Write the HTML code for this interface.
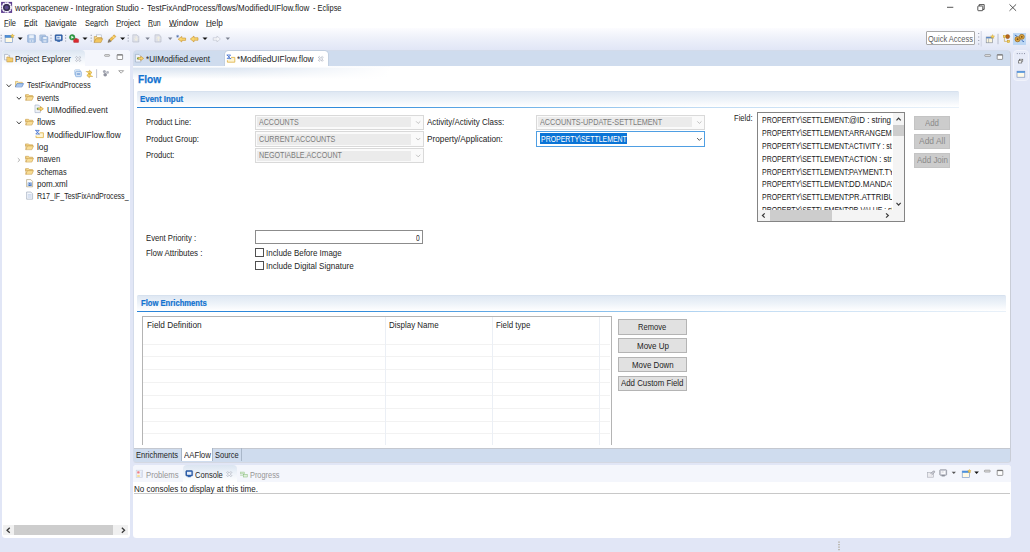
<!DOCTYPE html>
<html><head><meta charset="utf-8"><title>workspacenew - Integration Studio - Eclipse</title>
<style>
*{box-sizing:border-box;margin:0;padding:0}
html,body{width:1030px;height:552px;overflow:hidden;background:#e1e6f6}
body{position:relative;font-family:"Liberation Sans",sans-serif;font-size:8.6px;color:#1c1c1c}
.a{position:absolute}
.t{position:absolute;white-space:nowrap;line-height:12px;height:12px;transform-origin:0 0}
u{text-decoration-thickness:0.7px;text-underline-offset:0px;text-decoration-color:#8c8c8c}
svg{position:absolute;overflow:visible}
.s{display:inline-block;vertical-align:top;height:12px;white-space:pre}
.k{display:inline-block;transform-origin:0 0;white-space:pre}
</style></head><body>
<div class="a" style="left:0px;top:0px;width:1030.0px;height:28.0px;background:#fff"></div>
<div class="a" style="left:0px;top:28px;width:1030.0px;height:22.0px;background:linear-gradient(#fcfcff 0%,#eef1fa 45%,#e1e6f6 100%)"></div>
<div class="a" style="left:1.6px;top:50.3px;width:128.6px;height:487.5px;background:#fff;border-radius:3.5px"></div>
<div class="a" style="left:1.6px;top:50.3px;width:128.6px;height:16.1px;background:#f4f6fc;border-radius:3.5px 3.5px 0 0"></div>
<div class="a" style="left:1.6px;top:50.3px;width:83.4px;height:16.1px;background:linear-gradient(#dbe5f1,#f2f6fb 60%,#ffffff);border-radius:3.5px 4px 0 0"></div>
<div class="a" style="left:3.4px;top:525.1px;width:125.0px;height:10.3px;background:#f0f0f0"></div>
<div class="a" style="left:14.3px;top:525.1px;width:98.5px;height:10.3px;background:#cdcdcd"></div>
<div class="a" style="left:133px;top:50.4px;width:878.0px;height:412.5px;background:#cfdcee;border-radius:4.5px 4.5px 3.5px 3.5px;border:1px solid #d3dbea;border-right-color:#c9cdd7;border-bottom-color:#d4d8e2"></div>
<div class="a" style="left:134px;top:65.6px;width:876.0px;height:382.5px;background:#fff"></div>
<div class="a" style="left:134px;top:447.6px;width:876.0px;height:0.7px;background:#c4c8d0"></div>
<div class="a" style="left:133px;top:65.6px;width:257.0px;height:13.4px;background:linear-gradient(#ffffff 0%,#f3f6fb 11%,#d9e3f0 15%,#e8eef6 50%,#ffffff 100%)"></div>
<div class="a" style="left:133px;top:67px;width:257.0px;height:12.0px;background:linear-gradient(90deg,rgba(255,255,255,0) 0%,rgba(255,255,255,0.1) 40%,rgba(255,255,255,0.6) 72%,#fff 100%)"></div>
<div class="a" style="left:224.8px;top:50.6px;width:103.0px;height:15.4px;background:#fff;border-radius:3.5px 3.5px 0 0;box-shadow:0 0 0 0.7px #bccadc"></div>
<div class="a" style="left:224px;top:65.6px;width:105.0px;height:1.4px;background:#fff"></div>
<div class="a" style="left:136.8px;top:91.2px;width:822.2px;height:15.8px;background:linear-gradient(#cfdbea 0,#dfe8f3 1px,#eef3f9 55%,#ffffff 100%);border-radius:1.5px 1.5px 0 0"></div>
<div class="a" style="left:136.8px;top:106.6px;width:822.2px;height:1.3px;background:linear-gradient(90deg,#2a84d8 0%,#2f8ada 25%,#7cb9ea 50%,#c0dbf3 68%,#e9f1f9 100%)"></div>
<div class="a" style="left:136.8px;top:295.2px;width:869.2px;height:15.8px;background:linear-gradient(#cfdbea 0,#dfe8f3 1px,#eef3f9 55%,#ffffff 100%);border-radius:1.5px 1.5px 0 0"></div>
<div class="a" style="left:136.8px;top:310.6px;width:869.2px;height:1.3px;background:linear-gradient(90deg,#2a84d8 0%,#2f8ada 25%,#7cb9ea 50%,#c0dbf3 68%,#e9f1f9 100%)"></div>
<div class="a" style="left:255px;top:114.6px;width:169.0px;height:15.0px;background:#fafafa;border:1px solid #d9d9d9"></div>
<div class="a" style="left:256.7px;top:117.0px;width:154.7px;height:10.4px;background:#ebebeb"></div>
<div class="a" style="left:255px;top:131.2px;width:169.0px;height:15.6px;background:#fafafa;border:1px solid #d9d9d9"></div>
<div class="a" style="left:256.7px;top:133.6px;width:154.7px;height:11.0px;background:#ebebeb"></div>
<div class="a" style="left:255px;top:148.2px;width:169.0px;height:15.3px;background:#fafafa;border:1px solid #d9d9d9"></div>
<div class="a" style="left:256.7px;top:150.6px;width:154.7px;height:10.7px;background:#ebebeb"></div>
<div class="a" style="left:536px;top:114.6px;width:169.0px;height:15.0px;background:#fafafa;border:1px solid #d9d9d9"></div>
<div class="a" style="left:537.7px;top:117.0px;width:154.7px;height:10.4px;background:#ebebeb"></div>
<div class="a" style="left:536px;top:131.1px;width:169.0px;height:15.8px;background:#fff;border:1px solid #4f9fe3"></div>
<div class="a" style="left:540.2px;top:133.2px;width:86.6px;height:10.6px;background:#0a74d6"></div>
<div class="a" style="left:757.2px;top:112.4px;width:147.8px;height:109.9px;background:#fff;border:1px solid #848484"></div>
<div class="a" style="left:893.2px;top:113.4px;width:10.8px;height:96.4px;background:#f4f4f4"></div>
<div class="a" style="left:893.2px;top:124.8px;width:10.8px;height:11.0px;background:#cdcdcd"></div>
<div class="a" style="left:758.2px;top:209.8px;width:145.8px;height:11.5px;background:#f4f4f4"></div>
<div class="a" style="left:770.4px;top:209.8px;width:61.8px;height:11.5px;background:#cdcdcd"></div>
<div class="a" style="left:913.7px;top:115.5px;width:36.2px;height:14.7px;background:#cccccc;border:1px solid #c4c4c4"></div>
<div class="a" style="left:913.7px;top:134.1px;width:36.2px;height:14.7px;background:#cccccc;border:1px solid #c4c4c4"></div>
<div class="a" style="left:913.7px;top:153.2px;width:36.2px;height:14.7px;background:#cccccc;border:1px solid #c4c4c4"></div>
<div class="a" style="left:255.2px;top:230.3px;width:168.3px;height:14.1px;background:#fff;border:1px solid #8c8c8c"></div>
<div class="a" style="left:255.3px;top:248.1px;width:8.7px;height:8.7px;background:#fff;border:1px solid #505050"></div>
<div class="a" style="left:255.3px;top:261.3px;width:8.7px;height:8.7px;background:#fff;border:1px solid #505050"></div>
<div class="a" style="left:142.2px;top:316.2px;width:469.8px;height:129.2px;background:#fff;border:1px solid #b4b4b4;border-bottom:none"></div>
<div class="a" style="left:143.2px;top:343.5px;width:467.1px;height:1.0px;background:#f2f2f2"></div>
<div class="a" style="left:143.2px;top:356.35px;width:467.1px;height:1.0px;background:#f2f2f2"></div>
<div class="a" style="left:143.2px;top:369.2px;width:467.1px;height:1.0px;background:#f2f2f2"></div>
<div class="a" style="left:143.2px;top:382.05px;width:467.1px;height:1.0px;background:#f2f2f2"></div>
<div class="a" style="left:143.2px;top:394.9px;width:467.1px;height:1.0px;background:#f2f2f2"></div>
<div class="a" style="left:143.2px;top:407.75px;width:467.1px;height:1.0px;background:#f2f2f2"></div>
<div class="a" style="left:143.2px;top:420.6px;width:467.1px;height:1.0px;background:#f2f2f2"></div>
<div class="a" style="left:143.2px;top:433.45px;width:467.1px;height:1.0px;background:#f2f2f2"></div>
<div class="a" style="left:384.6px;top:317.2px;width:1.0px;height:128.2px;background:#ebeff5"></div>
<div class="a" style="left:491.9px;top:317.2px;width:1.0px;height:128.2px;background:#ebeff5"></div>
<div class="a" style="left:599.2px;top:317.2px;width:1.0px;height:128.2px;background:#ebeff5"></div>
<div class="a" style="left:618.3px;top:319.4px;width:68.3px;height:15.4px;background:#e1e1e1;border:1px solid #b4b4b4"></div>
<div class="a" style="left:618.3px;top:338.3px;width:68.3px;height:15.0px;background:#e1e1e1;border:1px solid #b4b4b4"></div>
<div class="a" style="left:618.3px;top:357.2px;width:68.3px;height:14.6px;background:#e1e1e1;border:1px solid #b4b4b4"></div>
<div class="a" style="left:618.3px;top:376.1px;width:68.3px;height:14.8px;background:#e1e1e1;border:1px solid #b4b4b4"></div>
<div class="a" style="left:181.5px;top:448.4px;width:30.6px;height:12.8px;background:#fff"></div>
<div class="a" style="left:181.0px;top:448.4px;width:0.7px;height:12.8px;background:#a9b7c9"></div>
<div class="a" style="left:212.0px;top:448.4px;width:0.7px;height:12.8px;background:#a9b7c9"></div>
<div class="a" style="left:240.6px;top:448.4px;width:0.7px;height:12.8px;background:#a9b7c9"></div>
<div class="a" style="left:132.6px;top:465.3px;width:878.4px;height:72.5px;background:#fff;border-radius:3.5px"></div>
<div class="a" style="left:132.6px;top:465.3px;width:878.4px;height:16.3px;background:#f4f6fc;border-radius:3.5px 3.5px 0 0"></div>
<div class="a" style="left:182.8px;top:465.3px;width:54.0px;height:16.3px;background:linear-gradient(#dbe5f1,#f2f6fb 60%,#ffffff);border-radius:4px 4px 0 0"></div>
<div class="a" style="left:133.5px;top:493.4px;width:876.0px;height:1.0px;background:#c8c8c8"></div>
<div class="a" style="left:926px;top:31.3px;width:48.8px;height:14.2px;background:#fff;border:1px solid #a8a8a8;border-radius:1px"></div>
<div class="a" style="left:1013.3px;top:33.2px;width:12.5px;height:11.5px;background:#bcd7f4"></div>
<div class="a" style="left:1012.8px;top:49.8px;width:16.0px;height:31.4px;background:#e7ebf8;border:1px solid #f1f3fb;border-radius:4px"></div>
<div class="t" style="left:15.0px;top:1.6px;font-size:8.6px;color:#1a1a1a"><span class="s" style="width:131.60px"><span class="k" style="transform:scaleX(0.9388)">workspacenew - Integration Studio - </span></span><span class="s" style="width:166.10px"><span class="k" style="transform:scaleX(0.9304)">TestFixAndProcess/flows/ModifiedUIFlow.flow </span></span><span class="s" style="width:68.50px"><span class="k" style="transform:scaleX(0.8649)">- Eclipse</span></span></div>
<div class="t" style="left:3.9px;top:16.8px;font-size:8.6px;color:#1a1a1a;transform:scaleX(0.8658);"><u>F</u>ile</div>
<div class="t" style="left:24.1px;top:16.8px;font-size:8.6px;color:#1a1a1a;transform:scaleX(0.8979);"><u>E</u>dit</div>
<div class="t" style="left:45.4px;top:16.8px;font-size:8.6px;color:#1a1a1a;transform:scaleX(0.9311);"><u>N</u>avigate</div>
<div class="t" style="left:84.7px;top:16.8px;font-size:8.6px;color:#1a1a1a;transform:scaleX(0.8587);">Se<u>a</u>rch</div>
<div class="t" style="left:116.0px;top:16.8px;font-size:8.6px;color:#1a1a1a;transform:scaleX(0.9009);"><u>P</u>roject</div>
<div class="t" style="left:148.4px;top:16.8px;font-size:8.6px;color:#1a1a1a;transform:scaleX(0.8048);"><u>R</u>un</div>
<div class="t" style="left:169.1px;top:16.8px;font-size:8.6px;color:#1a1a1a;transform:scaleX(0.9610);"><u>W</u>indow</div>
<div class="t" style="left:206.1px;top:16.8px;font-size:8.6px;color:#1a1a1a;transform:scaleX(0.9442);"><u>H</u>elp</div>
<div class="t" style="left:14.7px;top:52.8px;font-size:8.6px;color:#242424;transform:scaleX(0.9159);">Project Explorer</div>
<div class="t" style="left:26.8px;top:79.2px;font-size:8.6px;color:#242424;transform:scaleX(0.8646);">TestFixAndProcess</div>
<div class="t" style="left:36.7px;top:91.6px;font-size:8.6px;color:#242424;transform:scaleX(0.8686);">events</div>
<div class="t" style="left:46.9px;top:103.8px;font-size:8.6px;color:#242424;transform:scaleX(0.9411);">UIModified.event</div>
<div class="t" style="left:36.7px;top:116.3px;font-size:8.6px;color:#242424;transform:scaleX(0.9391);">flows</div>
<div class="t" style="left:46.8px;top:128.7px;font-size:8.6px;color:#242424;transform:scaleX(0.9644);">ModifiedUIFlow.flow</div>
<div class="t" style="left:36.7px;top:140.8px;font-size:8.6px;color:#242424;transform:scaleX(0.9766);">log</div>
<div class="t" style="left:36.7px;top:153.3px;font-size:8.6px;color:#242424;transform:scaleX(0.8993);">maven</div>
<div class="t" style="left:36.7px;top:165.6px;font-size:8.6px;color:#242424;transform:scaleX(0.8607);">schemas</div>
<div class="t" style="left:36.7px;top:177.8px;font-size:8.6px;color:#242424;transform:scaleX(0.9389);">pom.xml</div>
<div class="t" style="left:36.7px;top:190.3px;font-size:8.6px;color:#242424;transform:scaleX(0.8230);">R17_IF_TestFixAndProcess_</div>
<div class="t" style="left:145.7px;top:52.8px;font-size:8.6px;color:#242424;transform:scaleX(0.9448);">*UIModified.event</div>
<div class="t" style="left:237.2px;top:52.8px;font-size:8.6px;color:#242424;transform:scaleX(0.9591);">*ModifiedUIFlow.flow</div>
<div class="t" style="left:137.8px;top:72.9px;font-size:11.2px;color:#1272cf;transform:scaleX(0.9064);font-weight:bold;-webkit-text-stroke:0.25px #1272cf;">Flow</div>
<div class="t" style="left:140.4px;top:92.5px;font-size:8.6px;color:#1272cf;transform:scaleX(0.9231);font-weight:bold;-webkit-text-stroke:0.2px #1272cf;">Event Input</div>
<div class="t" style="left:140.5px;top:296.7px;font-size:8.6px;color:#1272cf;transform:scaleX(0.8890);font-weight:bold;-webkit-text-stroke:0.2px #1272cf;">Flow Enrichments</div>
<div class="t" style="left:145.6px;top:116.4px;font-size:8.6px;color:#242424;transform:scaleX(0.8906);">Product Line:</div>
<div class="t" style="left:145.6px;top:132.8px;font-size:8.6px;color:#242424;transform:scaleX(0.9094);">Product Group:</div>
<div class="t" style="left:145.6px;top:149.3px;font-size:8.6px;color:#242424;transform:scaleX(0.8902);">Product:</div>
<div class="t" style="left:426.6px;top:116.4px;font-size:8.6px;color:#242424;transform:scaleX(0.9279);">Activity/Activity Class:</div>
<div class="t" style="left:426.6px;top:132.8px;font-size:8.6px;color:#242424;transform:scaleX(0.9572);">Property/Application:</div>
<div class="t" style="left:259.4px;top:116.4px;font-size:8.6px;color:#7b7b7b;transform:scaleX(0.8231);">ACCOUNTS</div>
<div class="t" style="left:259.4px;top:132.8px;font-size:8.6px;color:#7b7b7b;transform:scaleX(0.8334);">CURRENT.ACCOUNTS</div>
<div class="t" style="left:259.4px;top:149.3px;font-size:8.6px;color:#7b7b7b;transform:scaleX(0.8306);">NEGOTIABLE.ACCOUNT</div>
<div class="t" style="left:540.2px;top:116.4px;font-size:8.6px;color:#7b7b7b;transform:scaleX(0.8434);">ACCOUNTS-UPDATE-SETTLEMENT</div>
<div class="t" style="left:540.6px;top:132.8px;font-size:8.6px;color:#fff;transform:scaleX(0.8069);">PROPERTY\SETTLEMENT</div>
<div class="t" style="left:733.9px;top:111.8px;font-size:8.6px;color:#242424;transform:scaleX(0.8851);">Field:</div>
<div class="a" style="left:758.2px;top:113.4px;width:134.2px;height:96.2px;overflow:hidden"><div class="t" style="left:4.1px;top:0.9px;font-size:8.3px;color:#1a1a1a"><span class="s" style="width:86.70px"><span class="k" style="transform:scaleX(0.8410)">PROPERTY\SETTLEMENT:</span></span><span class="s" style="width:82.00px"><span class="k" style="transform:scaleX(0.9559)">@ID : string</span></span></div></div>
<div class="a" style="left:758.2px;top:113.4px;width:134.2px;height:96.2px;overflow:hidden"><div class="t" style="left:4.1px;top:13.8px;font-size:8.3px;color:#1a1a1a"><span class="s" style="width:86.70px"><span class="k" style="transform:scaleX(0.8410)">PROPERTY\SETTLEMENT:</span></span><span class="s" style="width:82.80px"><span class="k" style="transform:scaleX(0.8925)">ARRANGEMENT</span></span></div></div>
<div class="a" style="left:758.2px;top:113.4px;width:134.2px;height:96.2px;overflow:hidden"><div class="t" style="left:4.1px;top:26.6px;font-size:8.3px;color:#1a1a1a"><span class="s" style="width:86.70px"><span class="k" style="transform:scaleX(0.8410)">PROPERTY\SETTLEMENT:</span></span><span class="s" style="width:80.80px"><span class="k" style="transform:scaleX(0.8453)">ACTIVITY : string</span></span></div></div>
<div class="a" style="left:758.2px;top:113.4px;width:134.2px;height:96.2px;overflow:hidden"><div class="t" style="left:4.1px;top:39.4px;font-size:8.3px;color:#1a1a1a"><span class="s" style="width:86.70px"><span class="k" style="transform:scaleX(0.8410)">PROPERTY\SETTLEMENT:</span></span><span class="s" style="width:82.70px"><span class="k" style="transform:scaleX(0.8992)">ACTION : string</span></span></div></div>
<div class="a" style="left:758.2px;top:113.4px;width:134.2px;height:96.2px;overflow:hidden"><div class="t" style="left:4.1px;top:52.2px;font-size:8.3px;color:#1a1a1a"><span class="s" style="width:86.70px"><span class="k" style="transform:scaleX(0.8410)">PROPERTY\SETTLEMENT:</span></span><span class="s" style="width:80.00px"><span class="k" style="transform:scaleX(0.8822)">PAYMENT.TYPE</span></span></div></div>
<div class="a" style="left:758.2px;top:113.4px;width:134.2px;height:96.2px;overflow:hidden"><div class="t" style="left:4.1px;top:65.1px;font-size:8.3px;color:#1a1a1a"><span class="s" style="width:86.70px"><span class="k" style="transform:scaleX(0.8410)">PROPERTY\SETTLEMENT:</span></span><span class="s" style="width:82.70px"><span class="k" style="transform:scaleX(0.9646)">DD.MANDATE</span></span></div></div>
<div class="a" style="left:758.2px;top:113.4px;width:134.2px;height:96.2px;overflow:hidden"><div class="t" style="left:4.1px;top:77.9px;font-size:8.3px;color:#1a1a1a"><span class="s" style="width:86.70px"><span class="k" style="transform:scaleX(0.8410)">PROPERTY\SETTLEMENT:</span></span><span class="s" style="width:79.50px"><span class="k" style="transform:scaleX(0.9247)">PR.ATTRIBUTE</span></span></div></div>
<div class="a" style="left:758.2px;top:113.4px;width:134.2px;height:96.2px;overflow:hidden"><div class="t" style="left:4.1px;top:90.7px;font-size:8.3px;color:#1a1a1a"><span class="s" style="width:86.70px"><span class="k" style="transform:scaleX(0.8410)">PROPERTY\SETTLEMENT:</span></span><span class="s" style="width:82.40px"><span class="k" style="transform:scaleX(0.8233)">PR.VALUE : string</span></span></div></div>
<div class="t" style="left:925.0px;top:116.5px;font-size:8.6px;color:#8a8a8a;transform:scaleX(0.9152);">Add</div>
<div class="t" style="left:918.9px;top:135.2px;font-size:8.6px;color:#8a8a8a;transform:scaleX(0.9826);">Add All</div>
<div class="t" style="left:916.5px;top:154.2px;font-size:8.6px;color:#8a8a8a;transform:scaleX(0.9267);">Add Join</div>
<div class="t" style="left:146.1px;top:231.7px;font-size:8.6px;color:#242424;transform:scaleX(0.8964);">Event Priority :</div>
<div class="t" style="left:416.1px;top:231.7px;font-size:8.6px;color:#242424;transform:scaleX(0.7739);">0</div>
<div class="t" style="left:146.1px;top:246.6px;font-size:8.6px;color:#242424;transform:scaleX(0.9241);">Flow Attributes :</div>
<div class="t" style="left:266.2px;top:246.5px;font-size:8.6px;color:#242424;transform:scaleX(0.9265);">Include Before Image</div>
<div class="t" style="left:266.2px;top:259.7px;font-size:8.6px;color:#242424;transform:scaleX(0.9414);">Include Digital Signature</div>
<div class="t" style="left:147.1px;top:318.5px;font-size:8.6px;color:#242424;transform:scaleX(0.9605);">Field Definition</div>
<div class="t" style="left:388.6px;top:318.5px;font-size:8.6px;color:#242424;transform:scaleX(0.9271);">Display Name</div>
<div class="t" style="left:495.9px;top:318.5px;font-size:8.6px;color:#242424;transform:scaleX(0.9204);">Field type</div>
<div class="t" style="left:638.2px;top:321.1px;font-size:8.6px;color:#242424;transform:scaleX(0.8812);">Remove</div>
<div class="t" style="left:636.6px;top:339.9px;font-size:8.6px;color:#242424;transform:scaleX(0.9305);">Move Up</div>
<div class="t" style="left:631.8px;top:358.6px;font-size:8.6px;color:#242424;transform:scaleX(0.9168);">Move Down</div>
<div class="t" style="left:620.9px;top:377.2px;font-size:8.6px;color:#242424;transform:scaleX(0.9149);">Add Custom Field</div>
<div class="t" style="left:136.4px;top:449.2px;font-size:8.6px;color:#242424;transform:scaleX(0.8814);">Enrichments</div>
<div class="t" style="left:183.8px;top:449.2px;font-size:8.6px;color:#242424;transform:scaleX(0.9051);">AAFlow</div>
<div class="t" style="left:215.0px;top:449.2px;font-size:8.6px;color:#242424;transform:scaleX(0.8702);">Source</div>
<div class="t" style="left:145.9px;top:468.6px;font-size:8.6px;color:#959595;transform:scaleX(0.8981);">Problems</div>
<div class="t" style="left:195.0px;top:468.6px;font-size:8.6px;color:#242424;transform:scaleX(0.8817);">Console</div>
<div class="t" style="left:250.0px;top:468.6px;font-size:8.6px;color:#959595;transform:scaleX(0.8578);">Progress</div>
<div class="t" style="left:134.3px;top:482.6px;font-size:8.6px;color:#242424;transform:scaleX(0.9364);">No consoles to display at this time.</div>
<div class="t" style="left:927.9px;top:32.7px;font-size:8.6px;color:#5a5a5a;transform:scaleX(0.8722);">Quick Access</div>
<svg width="1030" height="552" viewBox="0 0 1030 552" style="left:0;top:0"><rect x="1.10" y="1.90" width="11.00" height="11.00" fill="#5b3c8e" stroke="none" stroke-width="0.7" rx="0" opacity="1"/>
<circle cx="6.60" cy="7.40" r="4.00" fill="none" stroke="#f6f4fb" stroke-width="1.2" opacity="0.9"/>
<circle cx="6.60" cy="7.40" r="4.50" fill="none" stroke="#f6f4fb" stroke-width="1.7" stroke-dasharray="1.75 0.6" opacity="1"/>
<circle cx="6.60" cy="7.40" r="3.50" fill="#34304c" stroke="none" stroke-width="0.7" opacity="1"/>
<circle cx="6.60" cy="7.40" r="2.00" fill="#5b4a8d" stroke="none" stroke-width="0.7" opacity="1"/>
<line x1="947.00" y1="7.30" x2="953.30" y2="7.30" stroke="#2b2b2b" stroke-width="0.8" opacity="1" stroke-linecap="butt"/>
<rect x="977.80" y="6.00" width="5.00" height="4.70" fill="none" stroke="#2b2b2b" stroke-width="0.8" rx="0.6" opacity="1"/>
<polyline points="979.20,6.00 979.20,4.60 984.20,4.60 984.20,9.40 982.80,9.40" fill="none" stroke="#2b2b2b" stroke-width="0.8" opacity="1" stroke-linejoin="miter"/>
<line x1="1009.50" y1="4.40" x2="1016.10" y2="10.80" stroke="#2b2b2b" stroke-width="0.8" opacity="1" stroke-linecap="butt"/>
<line x1="1009.50" y1="10.80" x2="1016.10" y2="4.40" stroke="#2b2b2b" stroke-width="0.8" opacity="1" stroke-linecap="butt"/>
<line x1="1.20" y1="34.80" x2="1.20" y2="43.00" stroke="#8e93a6" stroke-width="1.1" stroke-dasharray="1.1 1.7" opacity="0.85" stroke-linecap="butt"/>
<rect x="5.10" y="35.60" width="7.50" height="6.70" fill="#fff9e3" stroke="#6b8fc4" stroke-width="0.6" rx="0" opacity="1"/>
<rect x="5.10" y="35.60" width="7.50" height="1.90" fill="#4a8fdc" stroke="#3b78c0" stroke-width="0.5" rx="0" opacity="1"/>
<polygon points="12.40,33.90 13.00,35.30 14.40,35.50 13.30,36.40 13.60,37.80 12.40,37.00 11.20,37.80 11.50,36.40 10.40,35.50 11.80,35.30" fill="#f8d354" stroke="#c79a2a" stroke-width="0.4" opacity="1" stroke-linejoin="miter"/>
<polygon points="17.70,37.40 22.70,37.40 20.20,40.00" fill="#111" stroke="none" stroke-width="0.6" opacity="1" stroke-linejoin="miter"/>
<rect x="27.60" y="34.90" width="7.80" height="7.40" fill="#a8c2e4" stroke="#86a3cc" stroke-width="0.6" rx="0.5" opacity="1"/>
<rect x="29.20" y="35.20" width="4.60" height="3.00" fill="#e9f0f9" stroke="none" stroke-width="0.7" rx="0" opacity="1"/>
<rect x="29.50" y="39.60" width="4.00" height="2.70" fill="#d4e0f1" stroke="none" stroke-width="0.7" rx="0" opacity="1"/>
<rect x="30.90" y="39.90" width="1.20" height="2.10" fill="#a8c2e4" stroke="none" stroke-width="0.7" rx="0" opacity="1"/>
<rect x="39.80" y="34.90" width="5.80" height="5.70" fill="#b4cae6" stroke="#90aacf" stroke-width="0.6" rx="0.5" opacity="1"/>
<rect x="41.80" y="36.60" width="6.00" height="5.80" fill="#a8c2e4" stroke="#86a3cc" stroke-width="0.6" rx="0.5" opacity="1"/>
<rect x="43.20" y="36.90" width="3.40" height="2.10" fill="#e9f0f9" stroke="none" stroke-width="0.7" rx="0" opacity="1"/>
<rect x="43.40" y="40.20" width="3.00" height="2.10" fill="#d4e0f1" stroke="none" stroke-width="0.7" rx="0" opacity="1"/>
<line x1="51.00" y1="34.80" x2="51.00" y2="43.00" stroke="#8e93a6" stroke-width="1.1" stroke-dasharray="1.1 1.7" opacity="0.85" stroke-linecap="butt"/>
<rect x="55.10" y="34.80" width="7.20" height="5.90" fill="#2c60ad" stroke="#214a8a" stroke-width="0.5" rx="0.6" opacity="1"/>
<rect x="56.30" y="35.90" width="4.80" height="3.60" fill="#e3ecf8" stroke="none" stroke-width="0.7" rx="0" opacity="1"/>
<rect x="57.20" y="36.80" width="2.40" height="1.60" fill="#6f95cc" stroke="none" stroke-width="0.7" rx="0" opacity="1"/>
<rect x="57.30" y="40.70" width="2.80" height="1.10" fill="#2c60ad" stroke="none" stroke-width="0.7" rx="0" opacity="1"/>
<line x1="65.60" y1="34.80" x2="65.60" y2="43.00" stroke="#8e93a6" stroke-width="1.1" stroke-dasharray="1.1 1.7" opacity="0.85" stroke-linecap="butt"/>
<circle cx="72.20" cy="37.30" r="2.70" fill="#2f9e44" stroke="#1f7a32" stroke-width="0.5" opacity="1"/>
<polygon points="71.30,35.80 71.30,38.80 73.80,37.30" fill="#fff" stroke="none" stroke-width="0.6" opacity="1" stroke-linejoin="miter"/>
<rect x="73.60" y="39.20" width="5.00" height="3.20" fill="#dc2a2f" stroke="#a81a20" stroke-width="0.4" rx="0.5" opacity="1"/>
<rect x="75.20" y="38.30" width="1.80" height="1.00" fill="none" stroke="#a81a20" stroke-width="0.5" rx="0" opacity="1"/>
<polygon points="82.50,37.40 87.50,37.40 85.00,40.00" fill="#111" stroke="none" stroke-width="0.6" opacity="1" stroke-linejoin="miter"/>
<line x1="91.20" y1="34.80" x2="91.20" y2="43.00" stroke="#8e93a6" stroke-width="1.1" stroke-dasharray="1.1 1.7" opacity="0.85" stroke-linecap="butt"/>
<rect x="96.60" y="34.90" width="4.60" height="4.10" fill="#fdfdfd" stroke="#9aa6ba" stroke-width="0.5" rx="0" opacity="1"/>
<path d="M94.3,42.2 v-5.6 h2.4 l0.8,0.9 h4.2 v1.2" fill="#f7dc92" stroke="#b98a2e" stroke-width="0.55" opacity="1" stroke-linejoin="round" stroke-linecap="round"/>
<path d="M94.3,42.2 l1.6,-3.5 h6.8 l-1.6,3.5z" fill="#f3c75f" stroke="#b98a2e" stroke-width="0.55" opacity="1" stroke-linejoin="round" stroke-linecap="round"/>
<path d="M108.2,42.0 l1.0,-2.6 l5.0,-4.6 l1.7,1.8 l-5.0,4.6z" fill="#f1c04e" stroke="#b88526" stroke-width="0.5" opacity="1" stroke-linejoin="round" stroke-linecap="round"/>
<path d="M108.2,42.0 l1.0,-2.6 l1.7,1.8z" fill="#6a6f80" stroke="#555a68" stroke-width="0.4" opacity="1" stroke-linejoin="round" stroke-linecap="round"/>
<path d="M112.6,36.2 l1.7,1.8" fill="none" stroke="#fff3c4" stroke-width="0.7" opacity="1" stroke-linejoin="round" stroke-linecap="round"/>
<polygon points="120.10,37.40 125.10,37.40 122.60,40.00" fill="#111" stroke="none" stroke-width="0.6" opacity="1" stroke-linejoin="miter"/>
<line x1="128.20" y1="34.80" x2="128.20" y2="43.00" stroke="#8e93a6" stroke-width="1.1" stroke-dasharray="1.1 1.7" opacity="0.85" stroke-linecap="butt"/>
<path d="M133.20,34.80 h3.80 l1.8,1.8 v5.40 h-5.60z" fill="#dfe1e8" stroke="#adb2c0" stroke-width="0.55" opacity="1" stroke-linejoin="round" stroke-linecap="round"/>
<path d="M136.2,36.5 v3.6 m-1.4,-1.4 l1.4,1.6 l1.4,-1.6" fill="none" stroke="#f4efdc" stroke-width="0.9" opacity="1" stroke-linejoin="round" stroke-linecap="round"/>
<polygon points="145.40,37.50 149.80,37.50 147.60,39.90" fill="#7d8290" stroke="none" stroke-width="0.6" opacity="1" stroke-linejoin="miter"/>
<path d="M155.40,34.80 h3.80 l1.8,1.8 v5.40 h-5.60z" fill="#dfe1e8" stroke="#adb2c0" stroke-width="0.55" opacity="1" stroke-linejoin="round" stroke-linecap="round"/>
<path d="M158.4,40.6 v-3.6 m-1.4,1.4 l1.4,-1.6 l1.4,1.6" fill="none" stroke="#f4efdc" stroke-width="0.9" opacity="1" stroke-linejoin="round" stroke-linecap="round"/>
<polygon points="168.00,37.50 172.40,37.50 170.20,39.90" fill="#7d8290" stroke="none" stroke-width="0.6" opacity="1" stroke-linejoin="miter"/>
<polygon points="178.20,39.20 181.75,36.40 181.75,38.02 185.60,38.02 185.60,40.38 181.75,40.38 181.75,42.00" fill="#f9d671" stroke="#c48a1e" stroke-width="0.55" opacity="1" stroke-linejoin="round"/>
<path d="M177.6,35.2 v2.2 m-1.1,-1.1 h2.2 m-1.9,-0.8 l1.6,1.6 m0,-1.6 l-1.6,1.6" fill="none" stroke="#3c5f9e" stroke-width="0.45" opacity="1" stroke-linejoin="round" stroke-linecap="round"/>
<polygon points="190.30,39.00 194.00,36.00 194.00,37.74 198.00,37.74 198.00,40.26 194.00,40.26 194.00,42.00" fill="#f9d671" stroke="#c48a1e" stroke-width="0.55" opacity="1" stroke-linejoin="round"/>
<polygon points="202.50,37.40 207.50,37.40 205.00,40.00" fill="#111" stroke="none" stroke-width="0.6" opacity="1" stroke-linejoin="miter"/>
<polygon points="220.40,39.00 216.94,36.00 216.94,37.74 213.20,37.74 213.20,40.26 216.94,40.26 216.94,42.00" fill="#f4f5f9" stroke="#b9bdc9" stroke-width="0.55" opacity="1" stroke-linejoin="round"/>
<polygon points="225.60,37.50 230.00,37.50 227.80,39.90" fill="#7d8290" stroke="none" stroke-width="0.6" opacity="1" stroke-linejoin="miter"/>
<line x1="978.70" y1="32.90" x2="978.70" y2="44.60" stroke="#8e93a6" stroke-width="1.1" stroke-dasharray="1.1 2.4" opacity="0.9" stroke-linecap="butt"/>
<line x1="981.20" y1="31.00" x2="981.20" y2="46.50" stroke="#c3c9da" stroke-width="0.7" opacity="1" stroke-linecap="butt"/>
<rect x="986.20" y="37.00" width="6.40" height="5.80" fill="#fbf5dc" stroke="#7d8696" stroke-width="0.6" rx="0" opacity="1"/>
<rect x="986.20" y="37.00" width="6.40" height="1.40" fill="#5c89c8" stroke="none" stroke-width="0.7" rx="0" opacity="1"/>
<line x1="988.60" y1="38.40" x2="988.60" y2="42.80" stroke="#7d8696" stroke-width="0.5" opacity="1" stroke-linecap="butt"/>
<polygon points="992.60,34.60 993.20,35.90 994.60,36.10 993.50,37.00 993.80,38.40 992.60,37.60 991.40,38.40 991.70,37.00 990.60,36.10 992.00,35.90" fill="#f8d354" stroke="#c79a2a" stroke-width="0.4" opacity="1" stroke-linejoin="miter"/>
<line x1="998.00" y1="33.80" x2="998.00" y2="44.20" stroke="#a8aebf" stroke-width="0.8" opacity="1" stroke-linecap="butt"/>
<circle cx="1007.60" cy="36.60" r="2.10" fill="#b5651d" stroke="#8a4a12" stroke-width="0.4" opacity="1"/>
<path d="M1004.4,36.4 v5.0 h3.6 M1004.4,36.4 h1.2" fill="none" stroke="#c79a2a" stroke-width="0.6" opacity="1" stroke-linejoin="round" stroke-linecap="round"/>
<rect x="1003.20" y="35.40" width="2.20" height="2.00" fill="#f6d25a" stroke="#b78c25" stroke-width="0.4" rx="0" opacity="1"/>
<rect x="1007.20" y="40.20" width="2.60" height="2.40" fill="#f6d25a" stroke="#b78c25" stroke-width="0.4" rx="0" opacity="1"/>
<circle cx="1017.60" cy="39.20" r="2.60" fill="#d9a441" stroke="#8a5a14" stroke-width="0.6" opacity="1"/>
<circle cx="1021.80" cy="36.80" r="2.50" fill="#d9a441" stroke="#8a5a14" stroke-width="0.6" opacity="1"/>
<circle cx="1017.60" cy="39.20" r="0.90" fill="#7a4a10" stroke="none" stroke-width="0.7" opacity="1"/>
<circle cx="1021.80" cy="36.80" r="0.90" fill="#7a4a10" stroke="none" stroke-width="0.7" opacity="1"/>
<path d="M1015.2,35.2 l1.6,1.0 M1023.6,41.6 l-1.6,-1.0" fill="none" stroke="#2a5db0" stroke-width="0.9" opacity="1" stroke-linejoin="round" stroke-linecap="round"/>
<path d="M5.0,54.4 h2.6 l0.8,0.9 h1.2 v4.6 h-4.6z" fill="#fdfdfd" stroke="#8f99ab" stroke-width="0.55" opacity="1" stroke-linejoin="round" stroke-linecap="round"/>
<path d="M7.2,57.0 h2.2 l0.8,0.9 h2.6 v4.0 h-5.6z" fill="#f5cf6e" stroke="#b98a2e" stroke-width="0.55" opacity="1" stroke-linejoin="round" stroke-linecap="round"/>
<polygon points="75.60,57.45 76.55,56.50 78.25,58.05 79.95,56.50 80.90,57.45 79.20,59.00 80.90,60.55 79.95,61.50 78.25,59.95 76.55,61.50 75.60,60.55 77.30,59.00" fill="#fbfcfe" stroke="#8d94a6" stroke-width="0.55" opacity="1" stroke-linejoin="round"/>
<rect x="104.60" y="54.60" width="5.00" height="1.70" fill="#e8e8e8" stroke="#7a7a7a" stroke-width="0.6" rx="0.6" opacity="1"/>
<rect x="117.10" y="54.60" width="5.50" height="4.90" fill="#fff" stroke="#707070" stroke-width="0.7" rx="0.5" opacity="1"/>
<line x1="117.10" y1="55.00" x2="122.60" y2="55.00" stroke="#707070" stroke-width="1.0" opacity="1" stroke-linecap="butt"/>
<rect x="74.60" y="69.80" width="5.60" height="5.20" fill="#eaf2fb" stroke="#9bbce3" stroke-width="0.6" rx="0.8" opacity="1"/>
<rect x="75.60" y="71.40" width="5.70" height="5.30" fill="#d5e4f6" stroke="#6f9fd8" stroke-width="0.65" rx="0.8" opacity="1"/>
<line x1="76.90" y1="74.00" x2="80.10" y2="74.00" stroke="#3f78c4" stroke-width="0.9" opacity="1" stroke-linecap="butt"/>
<path d="M86.2,71.6 h3.2 v-1.4 l2.6,2.4 l-2.6,2.4 v-1.4 h-1" fill="#f8d768" stroke="#c2922a" stroke-width="0.55" opacity="1" stroke-linejoin="round" stroke-linecap="round"/>
<path d="M92.6,76.4 h-3.2 v1.4 l-2.6,-2.4 l2.6,-2.4 v1.4 h1" fill="#f8d768" stroke="#c2922a" stroke-width="0.55" opacity="1" stroke-linejoin="round" stroke-linecap="round"/>
<line x1="96.60" y1="69.20" x2="96.60" y2="78.00" stroke="#a8aebf" stroke-width="0.7" opacity="1" stroke-linecap="butt"/>
<circle cx="104.40" cy="71.60" r="1.50" fill="#a6a9b4" stroke="none" stroke-width="0.7" opacity="1"/>
<circle cx="107.60" cy="72.40" r="1.40" fill="#b4b7c1" stroke="none" stroke-width="0.7" opacity="1"/>
<circle cx="105.20" cy="74.80" r="1.80" fill="#90939f" stroke="none" stroke-width="0.7" opacity="1"/>
<polygon points="118.70,70.70 123.60,70.70 121.15,73.20" fill="#fff" stroke="#6d6d6d" stroke-width="0.6" opacity="1" stroke-linejoin="miter"/>
<polyline points="6.70,84.40 8.90,86.80 11.10,84.40" fill="none" stroke="#3c3c3c" stroke-width="1.0" opacity="1" stroke-linejoin="miter"/>
<polyline points="16.80,96.90 19.00,99.30 21.20,96.90" fill="none" stroke="#3c3c3c" stroke-width="1.0" opacity="1" stroke-linejoin="miter"/>
<polyline points="16.80,121.50 19.00,123.90 21.20,121.50" fill="none" stroke="#3c3c3c" stroke-width="1.0" opacity="1" stroke-linejoin="miter"/>
<polyline points="17.80,158.10 19.80,160.00 17.80,161.90" fill="none" stroke="#9a9a9a" stroke-width="0.8" opacity="1" stroke-linejoin="miter"/>
<path d="M15.5,86.6 v-5.2 h2.4 l0.8,0.9 h3.6 v1.3" fill="#f8e6ad" stroke="#c9a040" stroke-width="0.55" opacity="1" stroke-linejoin="round" stroke-linecap="round"/>
<path d="M15.5,86.6 l1.5,-3.0 h6.6 l-1.5,3.0z" fill="#a9c6ef" stroke="#4878c4" stroke-width="0.6" opacity="1" stroke-linejoin="round" stroke-linecap="round"/>
<path d="M25.90,94.60 h2.6 l0.8,0.9 h3.3 v1.3 h-6.7z" fill="#f7dc92" stroke="#c7963a" stroke-width="0.55" opacity="1" stroke-linejoin="round" stroke-linecap="round"/>
<path d="M25.90,100.00 l1.5,-3.4 h6.1 l-1.5,3.4z" fill="#f8dd95" stroke="#c7963a" stroke-width="0.55" opacity="1" stroke-linejoin="round" stroke-linecap="round"/>
<path d="M25.90,100.00 v-4.6" fill="none" stroke="#c7963a" stroke-width="0.55" opacity="1" stroke-linejoin="round" stroke-linecap="round"/>
<path d="M35.40,105.00 h3.20 l1.8,1.8 v5.80 h-5.00z" fill="#eef2f9" stroke="#94a3bd" stroke-width="0.55" opacity="1" stroke-linejoin="round" stroke-linecap="round"/>
<polygon points="43.40,108.80 40.52,106.60 40.52,107.88 37.40,107.88 37.40,109.72 40.52,109.72 40.52,111.00" fill="#f9d671" stroke="#c48a1e" stroke-width="0.55" opacity="1" stroke-linejoin="round"/>
<polygon points="36.60,108.80 38.20,107.60 38.20,110.00" fill="#4aa04a" stroke="none" stroke-width="0.6" opacity="1" stroke-linejoin="miter"/>
<path d="M25.90,119.30 h2.6 l0.8,0.9 h3.3 v1.3 h-6.7z" fill="#f7dc92" stroke="#c7963a" stroke-width="0.55" opacity="1" stroke-linejoin="round" stroke-linecap="round"/>
<path d="M25.90,124.70 l1.5,-3.4 h6.1 l-1.5,3.4z" fill="#f8dd95" stroke="#c7963a" stroke-width="0.55" opacity="1" stroke-linejoin="round" stroke-linecap="round"/>
<path d="M25.90,124.70 v-4.6" fill="none" stroke="#c7963a" stroke-width="0.55" opacity="1" stroke-linejoin="round" stroke-linecap="round"/>
<path d="M25.90,143.90 h2.6 l0.8,0.9 h3.3 v1.3 h-6.7z" fill="#f7dc92" stroke="#c7963a" stroke-width="0.55" opacity="1" stroke-linejoin="round" stroke-linecap="round"/>
<path d="M25.90,149.30 l1.5,-3.4 h6.1 l-1.5,3.4z" fill="#f8dd95" stroke="#c7963a" stroke-width="0.55" opacity="1" stroke-linejoin="round" stroke-linecap="round"/>
<path d="M25.90,149.30 v-4.6" fill="none" stroke="#c7963a" stroke-width="0.55" opacity="1" stroke-linejoin="round" stroke-linecap="round"/>
<path d="M25.90,156.30 h2.6 l0.8,0.9 h3.3 v1.3 h-6.7z" fill="#f7dc92" stroke="#c7963a" stroke-width="0.55" opacity="1" stroke-linejoin="round" stroke-linecap="round"/>
<path d="M25.90,161.70 l1.5,-3.4 h6.1 l-1.5,3.4z" fill="#f8dd95" stroke="#c7963a" stroke-width="0.55" opacity="1" stroke-linejoin="round" stroke-linecap="round"/>
<path d="M25.90,161.70 v-4.6" fill="none" stroke="#c7963a" stroke-width="0.55" opacity="1" stroke-linejoin="round" stroke-linecap="round"/>
<path d="M25.90,168.60 h2.6 l0.8,0.9 h3.3 v1.3 h-6.7z" fill="#f7dc92" stroke="#c7963a" stroke-width="0.55" opacity="1" stroke-linejoin="round" stroke-linecap="round"/>
<path d="M25.90,174.00 l1.5,-3.4 h6.1 l-1.5,3.4z" fill="#f8dd95" stroke="#c7963a" stroke-width="0.55" opacity="1" stroke-linejoin="round" stroke-linecap="round"/>
<path d="M25.90,174.00 v-4.6" fill="none" stroke="#c7963a" stroke-width="0.55" opacity="1" stroke-linejoin="round" stroke-linecap="round"/>
<path d="M27.00,179.60 h3.80 l1.8,1.8 v5.40 h-5.60z" fill="#fff" stroke="#9a8a5a" stroke-width="0.55" opacity="1" stroke-linejoin="round" stroke-linecap="round"/>
<rect x="27.80" y="182.60" width="4.00" height="3.40" fill="#3b6fc0" stroke="none" stroke-width="0.7" rx="0" opacity="1"/>
<path d="M28.5,185.4 v-2.2 l1.3,1.4 l1.3,-1.4 v2.2" fill="none" stroke="#fff" stroke-width="0.5" opacity="1" stroke-linejoin="round" stroke-linecap="round"/>
<path d="M27.00,192.00 h3.80 l1.8,1.8 v5.40 h-5.60z" fill="#f4f7fc" stroke="#8a97ad" stroke-width="0.55" opacity="1" stroke-linejoin="round" stroke-linecap="round"/>
<path d="M28.2,194.6 h3 M28.2,195.9 h3 M28.2,197.2 h3" fill="none" stroke="#9db4d8" stroke-width="0.45" opacity="1" stroke-linejoin="round" stroke-linecap="round"/>
<polyline points="9.75,527.80 7.05,530.30 9.75,532.80" fill="none" stroke="#3a3a3a" stroke-width="1.3" opacity="1" stroke-linejoin="miter"/>
<polyline points="121.85,527.80 124.55,530.30 121.85,532.80" fill="none" stroke="#3a3a3a" stroke-width="1.3" opacity="1" stroke-linejoin="miter"/>
<path d="M135.80,54.40 h3.20 l1.8,1.8 v5.80 h-5.00z" fill="#eef2f9" stroke="#94a3bd" stroke-width="0.55" opacity="1" stroke-linejoin="round" stroke-linecap="round"/>
<polygon points="143.60,58.40 140.72,56.20 140.72,57.48 137.60,57.48 137.60,59.32 140.72,59.32 140.72,60.60" fill="#f9d671" stroke="#c48a1e" stroke-width="0.55" opacity="1" stroke-linejoin="round"/>
<polygon points="136.80,58.40 138.40,57.20 138.40,59.60" fill="#4aa04a" stroke="none" stroke-width="0.6" opacity="1" stroke-linejoin="miter"/>
<path d="M231.40,57.40 h3.4 v4.8 h-7.4 v-1.6" fill="#fdf4d4" stroke="#ddb040" stroke-width="0.8" opacity="1" stroke-linejoin="round" stroke-linecap="round"/>
<path d="M227.00,55.00 h3.6 l-3.4,3.6 h3.6 M227.30,55.30 l3.0,3.0" fill="none" stroke="#2f62c8" stroke-width="0.75" opacity="1" stroke-linejoin="round" stroke-linecap="round"/>
<path d="M40.00,132.80 h3.4 v4.8 h-7.4 v-1.6" fill="#fdf4d4" stroke="#ddb040" stroke-width="0.8" opacity="1" stroke-linejoin="round" stroke-linecap="round"/>
<path d="M35.60,130.40 h3.6 l-3.4,3.6 h3.6 M35.90,130.70 l3.0,3.0" fill="none" stroke="#2f62c8" stroke-width="0.75" opacity="1" stroke-linejoin="round" stroke-linecap="round"/>
<polygon points="318.30,57.45 319.25,56.50 320.75,57.95 322.25,56.50 323.20,57.45 321.70,58.90 323.20,60.35 322.25,61.30 320.75,59.85 319.25,61.30 318.30,60.35 319.80,58.90" fill="#fbfcfe" stroke="#8d94a6" stroke-width="0.55" opacity="1" stroke-linejoin="round"/>
<rect x="984.80" y="54.60" width="5.80" height="1.80" fill="#e8e8e8" stroke="#7a7a7a" stroke-width="0.6" rx="0.6" opacity="1"/>
<rect x="997.20" y="54.60" width="5.40" height="4.80" fill="#fff" stroke="#707070" stroke-width="0.7" rx="0.5" opacity="1"/>
<line x1="997.20" y1="55.00" x2="1002.60" y2="55.00" stroke="#707070" stroke-width="1.0" opacity="1" stroke-linecap="butt"/>
<line x1="1016.80" y1="53.60" x2="1025.40" y2="53.60" stroke="#7f8498" stroke-width="0.9" stroke-dasharray="1 1.4" opacity="1" stroke-linecap="butt"/>
<rect x="1019.60" y="59.20" width="3.20" height="2.00" fill="#fff" stroke="#4a4a4a" stroke-width="0.55" rx="0" opacity="1"/>
<rect x="1018.60" y="60.80" width="3.20" height="2.20" fill="#fff" stroke="#4a4a4a" stroke-width="0.55" rx="0" opacity="1"/>
<rect x="1017.00" y="71.20" width="7.80" height="6.00" fill="#fffbe8" stroke="#6b83b4" stroke-width="0.6" rx="0" opacity="1"/>
<rect x="1017.00" y="71.20" width="7.80" height="1.60" fill="#4a8fdc" stroke="none" stroke-width="0.7" rx="0" opacity="1"/>
<polyline points="416.10,121.35 418.20,123.45 420.30,121.35" fill="none" stroke="#b3b3b3" stroke-width="0.8" opacity="1" stroke-linejoin="miter"/>
<polyline points="416.10,137.95 418.20,140.05 420.30,137.95" fill="none" stroke="#b3b3b3" stroke-width="0.8" opacity="1" stroke-linejoin="miter"/>
<polyline points="416.10,154.75 418.20,156.85 420.30,154.75" fill="none" stroke="#b3b3b3" stroke-width="0.8" opacity="1" stroke-linejoin="miter"/>
<polyline points="697.30,121.35 699.40,123.45 701.50,121.35" fill="none" stroke="#b3b3b3" stroke-width="0.8" opacity="1" stroke-linejoin="miter"/>
<polyline points="697.10,138.05 699.40,140.35 701.70,138.05" fill="none" stroke="#4a4a4a" stroke-width="0.9" opacity="1" stroke-linejoin="miter"/>
<polyline points="896.50,120.35 898.60,118.05 900.70,120.35" fill="none" stroke="#3a3a3a" stroke-width="1.2" opacity="1" stroke-linejoin="miter"/>
<polyline points="896.50,202.85 898.60,205.15 900.70,202.85" fill="none" stroke="#3a3a3a" stroke-width="1.2" opacity="1" stroke-linejoin="miter"/>
<polyline points="764.75,213.40 762.45,215.50 764.75,217.60" fill="none" stroke="#3a3a3a" stroke-width="1.2" opacity="1" stroke-linejoin="miter"/>
<polyline points="886.05,213.40 888.35,215.50 886.05,217.60" fill="none" stroke="#3a3a3a" stroke-width="1.2" opacity="1" stroke-linejoin="miter"/>
<rect x="136.20" y="470.20" width="6.20" height="7.40" fill="#f6f8fc" stroke="#c3cbdc" stroke-width="0.6" rx="0" opacity="1"/>
<rect x="137.20" y="471.20" width="2.40" height="2.40" fill="#ee7f86" stroke="none" stroke-width="0.7" rx="0.6" opacity="1"/>
<rect x="137.20" y="474.80" width="2.60" height="2.20" fill="#f6dc9a" stroke="none" stroke-width="0.7" rx="0" opacity="1"/>
<line x1="141.20" y1="471.40" x2="141.20" y2="476.80" stroke="#c9d6ee" stroke-width="0.9" opacity="1" stroke-linecap="butt"/>
<rect x="185.80" y="470.60" width="6.80" height="5.40" fill="#2f62b0" stroke="#244c8c" stroke-width="0.5" rx="0.8" opacity="1"/>
<rect x="187.00" y="471.80" width="4.40" height="3.00" fill="#e6eefa" stroke="none" stroke-width="0.7" rx="0" opacity="1"/>
<rect x="187.60" y="476.00" width="3.20" height="1.20" fill="#2f62b0" stroke="none" stroke-width="0.7" rx="0" opacity="1"/>
<polygon points="226.80,472.55 227.75,471.60 229.30,473.15 230.85,471.60 231.80,472.55 230.25,474.10 231.80,475.65 230.85,476.60 229.30,475.05 227.75,476.60 226.80,475.65 228.35,474.10" fill="#fbfcfe" stroke="#8d94a6" stroke-width="0.55" opacity="1" stroke-linejoin="round"/>
<rect x="240.20" y="472.00" width="4.40" height="2.00" fill="#cfe6c9" stroke="#9cc493" stroke-width="0.4" rx="0" opacity="1"/>
<rect x="243.40" y="474.40" width="3.80" height="2.60" fill="#e2f1de" stroke="#7fb873" stroke-width="0.5" rx="0" opacity="1"/>
<line x1="240.20" y1="475.40" x2="243.00" y2="475.40" stroke="#b6d8ae" stroke-width="0.8" opacity="1" stroke-linecap="butt"/>
<rect x="927.40" y="472.60" width="6.20" height="4.60" fill="#ececf0" stroke="#a9acb6" stroke-width="0.6" rx="0" opacity="1"/>
<path d="M930.6,473.4 l2.6,-2.4 h1.4 v1.4 l-2.6,2.4" fill="#c4c6ce" stroke="#8e919c" stroke-width="0.5" opacity="1" stroke-linejoin="round" stroke-linecap="round"/>
<rect x="939.80" y="469.80" width="6.80" height="5.40" fill="#d9dbe2" stroke="#80848f" stroke-width="0.7" rx="0.6" opacity="1"/>
<rect x="941.20" y="471.00" width="4.00" height="3.00" fill="#fbfbfd" stroke="none" stroke-width="0.7" rx="0" opacity="1"/>
<rect x="941.60" y="475.20" width="3.20" height="1.20" fill="#80848f" stroke="none" stroke-width="0.7" rx="0" opacity="1"/>
<line x1="941.80" y1="472.00" x2="943.60" y2="472.00" stroke="#9a9eaa" stroke-width="0.5" opacity="1" stroke-linecap="butt"/>
<polygon points="951.70,471.65 955.90,471.65 953.80,473.95" fill="#555" stroke="none" stroke-width="0.6" opacity="1" stroke-linejoin="miter"/>
<rect x="962.20" y="471.00" width="7.20" height="6.60" fill="#fffae6" stroke="#6b8fc4" stroke-width="0.6" rx="0" opacity="1"/>
<rect x="962.20" y="471.00" width="7.20" height="1.80" fill="#4a8fdc" stroke="none" stroke-width="0.7" rx="0" opacity="1"/>
<polygon points="969.40,469.40 969.90,470.50 971.10,470.70 970.20,471.50 970.40,472.70 969.40,472.00 968.40,472.70 968.60,471.50 967.70,470.70 968.90,470.50" fill="#f8d354" stroke="#c79a2a" stroke-width="0.4" opacity="1" stroke-linejoin="miter"/>
<polygon points="974.30,471.55 978.90,471.55 976.60,474.05" fill="#111" stroke="none" stroke-width="0.6" opacity="1" stroke-linejoin="miter"/>
<rect x="984.40" y="470.20" width="5.80" height="1.80" fill="#e8e8e8" stroke="#7a7a7a" stroke-width="0.6" rx="0.6" opacity="1"/>
<rect x="997.20" y="470.20" width="5.60" height="5.20" fill="#fff" stroke="#707070" stroke-width="0.7" rx="0.5" opacity="1"/>
<line x1="997.20" y1="470.60" x2="1002.80" y2="470.60" stroke="#707070" stroke-width="1.0" opacity="1" stroke-linecap="butt"/>
<line x1="839.00" y1="541.50" x2="839.00" y2="551.50" stroke="#bdbab4" stroke-width="2.0" stroke-dasharray="1.2 1.3" opacity="1" stroke-linecap="butt"/></svg>
</body></html>
